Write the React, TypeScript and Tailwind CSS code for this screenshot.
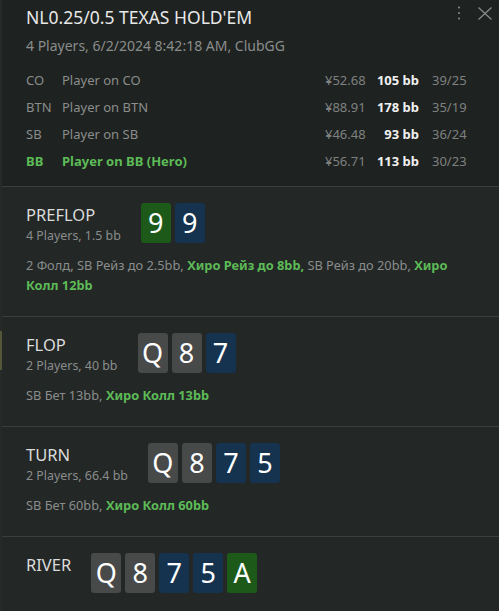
import React from "react";

type Card = { rank: string; tone: "green" | "blue" | "gray" };

type Street = {
  name: string;
  info?: string;
  cards: Card[];
  actions?: { text: string; hero?: boolean }[];
};

const CARD_BG: Record<Card["tone"], string> = {
  green: "bg-[#1d5a1a]",
  blue: "bg-[#15324e]",
  gray: "bg-[#484949]",
};

const players = [
  { pos: "CO", name: "Player on CO", money: "¥52.68", bb: "105 bb", stat: "39/25" },
  { pos: "BTN", name: "Player on BTN", money: "¥88.91", bb: "178 bb", stat: "35/19" },
  { pos: "SB", name: "Player on SB", money: "¥46.48", bb: "93 bb", stat: "36/24" },
  { pos: "BB", name: "Player on BB (Hero)", money: "¥56.71", bb: "113 bb", stat: "30/23", hero: true },
];

const streets: Street[] = [
  {
    name: "PREFLOP",
    info: "4 Players, 1.5 bb",
    cards: [
      { rank: "9", tone: "green" },
      { rank: "9", tone: "blue" },
    ],
    actions: [
      { text: "2 Фолд, SB Рейз до 2.5bb, " },
      { text: "Хиро Рейз до 8bb,", hero: true },
      { text: " SB Рейз до 20bb, " },
      { text: "Хиро Колл 12bb", hero: true },
    ],
  },
  {
    name: "FLOP",
    info: "2 Players, 40 bb",
    cards: [
      { rank: "Q", tone: "gray" },
      { rank: "8", tone: "gray" },
      { rank: "7", tone: "blue" },
    ],
    actions: [{ text: "SB Бет 13bb, " }, { text: "Хиро Колл 13bb", hero: true }],
  },
  {
    name: "TURN",
    info: "2 Players, 66.4 bb",
    cards: [
      { rank: "Q", tone: "gray" },
      { rank: "8", tone: "gray" },
      { rank: "7", tone: "blue" },
      { rank: "5", tone: "blue" },
    ],
    actions: [{ text: "SB Бет 60bb, " }, { text: "Хиро Колл 60bb", hero: true }],
  },
  {
    name: "RIVER",
    cards: [
      { rank: "Q", tone: "gray" },
      { rank: "8", tone: "gray" },
      { rank: "7", tone: "blue" },
      { rank: "5", tone: "blue" },
      { rank: "A", tone: "green" },
    ],
  },
];

const font = { fontFamily: "'Noto Sans', 'Open Sans', sans-serif" };

const StreetBlock: React.FC<{ street: Street; last?: boolean }> = ({ street, last }) => (
  <section className={`bg-[#232726] pl-[24px] pr-[24px] pt-[16px] ${last ? "pb-[16px]" : "pb-[21px] border-b border-[#3a3e3d]"}`}>
    <div className="flex items-start gap-[20px]">
      <div className="flex flex-col">
        <div className="text-[16.5px] leading-[24px] text-[#dcdcdc]">{street.name}</div>
        {street.info && <div className="text-[12.4px] leading-[18px] text-[#8a8d8c]">{street.info}</div>}
      </div>
      <div className="flex gap-[4px]">
        {street.cards.map((c, i) => (
          <div
            key={i}
            className={`w-[30px] h-[40px] rounded-[3px] flex items-center justify-center text-[27px] text-white ${CARD_BG[c.tone]}`}
          >
            {c.rank}
          </div>
        ))}
      </div>
    </div>
    {street.actions && (
      <p className="mt-[10px] text-[12.8px] leading-[20px] text-[#8a8d8c]">
        {street.actions.map((a, i) =>
          a.hero ? (
            <span key={i} className="font-bold text-[#5dbb57]">{a.text}</span>
          ) : (
            <span key={i}>{a.text}</span>
          )
        )}
      </p>
    )}
  </section>
);

export default function App() {
  return (
    <div className="flex w-[499px] h-[611px] overflow-hidden bg-[#232726]" style={font}>
      <div className="w-[2px] shrink-0 bg-[#262a29] flex flex-col">
        <div className="h-[331px]" />
        <div className="h-[39px] bg-[#55553a]" />
      </div>
      <div className="flex-1 flex flex-col">
        <header className="bg-[#1e2220] pl-[24px] pr-[24px] pt-[5px] pb-[11px] border-b border-[#3a3e3d] relative">
          <div className="absolute top-[6px] right-[7px] flex items-center gap-[17px] text-[#8a8d8c]">
            <svg width="4" height="14" viewBox="0 0 4 14" fill="currentColor">
              <circle cx="2" cy="1.5" r="1" />
              <circle cx="2" cy="7" r="1" />
              <circle cx="2" cy="12.5" r="1" />
            </svg>
            <svg width="14" height="13" viewBox="0 0 14 13" stroke="currentColor" strokeWidth="1.2" fill="none">
              <path d="M0.5 0.5 L13.5 12.5 M13.5 0.5 L0.5 12.5" />
            </svg>
          </div>
          <div className="text-[17.5px] leading-[24px] text-[#e8e8e8]">NL0.25/0.5 TEXAS HOLD'EM</div>
          <div className="mt-[7px] text-[14px] leading-[20px] text-[#8a8d8c]">4 Players, 6/2/2024 8:42:18 AM, ClubGG</div>
          <div className="mt-[11px] flex flex-col">
            {players.map((p) => (
              <div
                key={p.pos}
                className={`flex items-center h-[27px] text-[13px] whitespace-nowrap ${p.hero ? "text-[#5dbb57] font-bold" : "text-[#8a8d8c]"}`}
              >
                <span className="w-[36px]">{p.pos}</span>
                <span className="flex-1">{p.name}</span>
                <span className="w-[44px] font-normal text-[#7e8180]">{p.money}</span>
                <span className="w-[50px] text-right font-bold text-[#f0f0f0]">{p.bb}</span>
                <span className="w-[56px] pl-[13px] font-normal text-[#7e8180]">{p.stat}</span>
              </div>
            ))}
          </div>
        </header>
        {streets.map((s, i) => (
          <StreetBlock key={s.name} street={s} last={i === streets.length - 1} />
        ))}
      </div>
    </div>
  );
}
